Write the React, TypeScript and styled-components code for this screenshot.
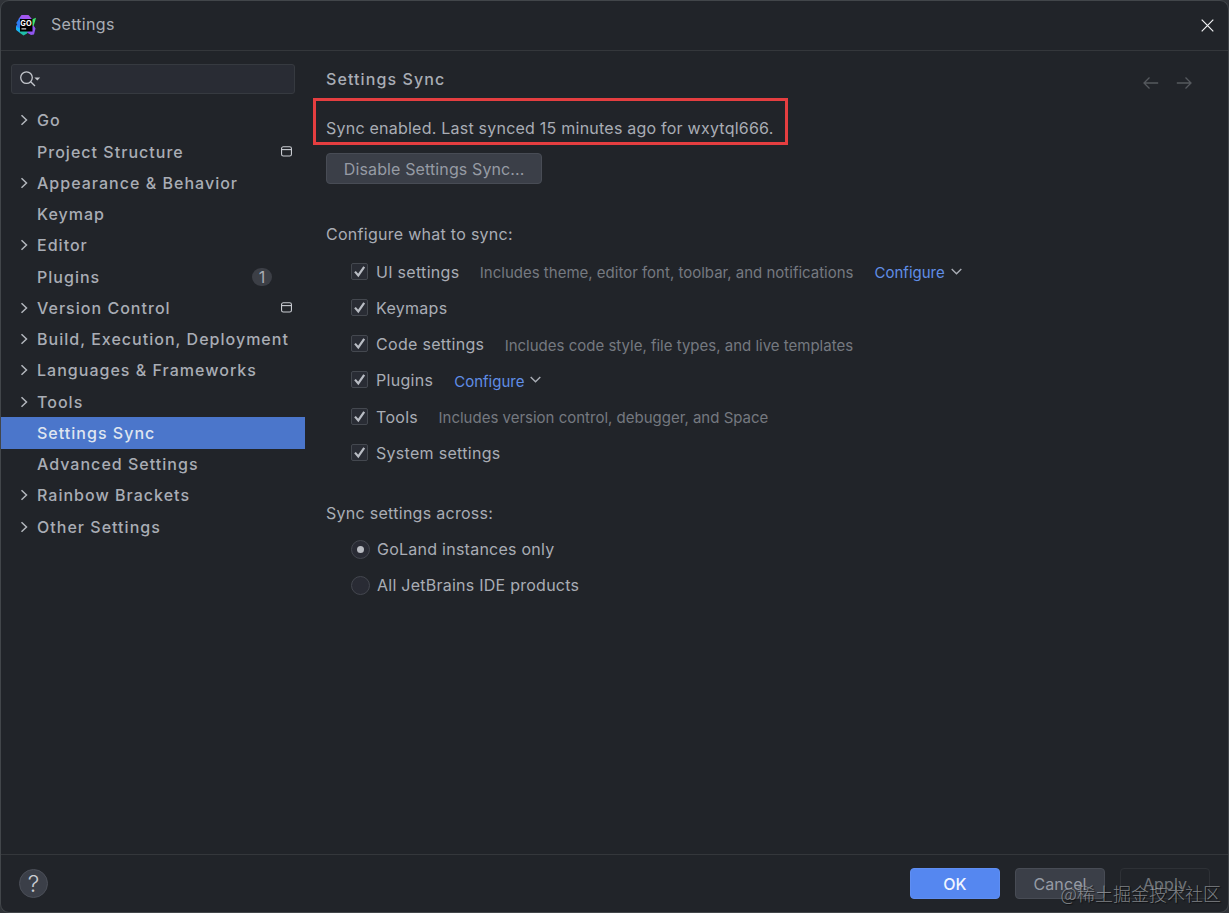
import React from 'react';
import styled, { createGlobalStyle, css } from 'styled-components';

const GlobalStyle = createGlobalStyle`
  *, *::before, *::after { box-sizing: border-box; }
  body {
    margin: 0;
    background: #303338;
    overflow: hidden;
    font-family: Inter, "Noto Sans CJK SC", sans-serif;
    font-size: 16px;
    color: #a9adb5;
  }
`;

const Window = styled.div`
  width: 1229px;
  height: 913px;
  display: flex;
  flex-direction: column;
  background: #212429;
  border: 1px solid #42464a;
  border-radius: 9px;
  position: relative;
`;

const TitleBar = styled.header`
  height: 50px;
  flex: none;
  display: flex;
  align-items: center;
  padding: 0 14px 2px 14px;
  border-bottom: 1px solid #34373b;
`;

const WindowTitle = styled.h1`
  margin: 0 auto 2px 14px;
  font-size: 16px;
  font-weight: 400;
  letter-spacing: 0.3px;
`;

const IconButton = styled.button`
  border: 0;
  padding: 0;
  background: none;
  color: ${(p) => p.color};
  display: flex;
`;

const CloseButton = styled(IconButton)`
  margin-top: 2px;
`;

const NavButton = styled(IconButton)`
  margin-top: 8px;
`;

const Body = styled.div`
  flex: 1;
  display: flex;
  min-height: 0;
`;

const Sidebar = styled.nav`
  width: 304px;
  flex: none;
  padding-top: 13px;
`;

const SearchField = styled.div`
  margin: 0 10px 10.65px;
  height: 30px;
  border: 1px solid #363a40;
  border-radius: 3px;
  background: #292c34;
  display: flex;
  align-items: center;
  padding-left: 8px;
`;

const TreeRow = styled.div<{ $selected?: boolean }>`
  height: 31.27px;
  display: flex;
  align-items: center;
  padding: 0 13px 0 18px;
  font-weight: 500;
  letter-spacing: 1.02px;
  white-space: nowrap;
  ${(p) => p.$selected && css`
    background: #4b76cb;
    color: #dfe5f0;
  `}
`;

const Arrow = styled.span`
  width: 18px;
  flex: none;
  display: flex;
`;

const TreeLabel = styled.span`
  flex: 1;
`;

const Badge = styled.span`
  width: 20px;
  height: 18px;
  margin-right: 20px;
  border-radius: 9px;
  background: #3c3f46;
  font-weight: 400;
  letter-spacing: 0;
  display: flex;
  align-items: center;
  justify-content: center;
`;

const Content = styled.main`
  flex: 1;
  padding-left: 21px;
  display: flex;
  flex-direction: column;
  align-items: flex-start;
`;

const ContentHeader = styled.div`
  height: 47px;
  width: 100%;
  padding: 9px 36px 0 0;
  display: flex;
  align-items: center;
  gap: 17px;
`;

const Heading = styled.h2`
  margin: 0 auto 0 0;
  font-size: 16px;
  font-weight: 500;
  letter-spacing: 1.1px;
`;

const Callout = styled.div`
  width: 475px;
  height: 47px;
  margin-left: -13px;
  padding: 13px 0 0 10px;
  border: 3px solid #e53e40;
  display: flex;
  align-items: center;
  white-space: nowrap;
  letter-spacing: 0.23px;
`;

const Button = styled.button<{ $kind?: 'primary' | 'disabled'; $width: number }>`
  width: ${(p) => p.$width}px;
  height: 31px;
  padding: 0;
  border-radius: 4px;
  border: 1px solid #484c55;
  background: #3b3f48;
  color: #969ba4;
  font: 400 16px Inter, sans-serif;
  letter-spacing: 0.12px;
  white-space: nowrap;
  ${(p) => p.$kind === 'primary' && css`
    background: #5587f0;
    border-color: #5f8ef2;
    color: #f0f5ff;
    font-weight: 500;
  `}
  ${(p) => p.$kind === 'disabled' && css`
    background: transparent;
    border-color: #2e3136;
    color: #70747a;
  `}
`;

const SyncButton = styled(Button)`
  margin-top: 8px;
`;

const GroupLabel = styled.div<{ $top: number }>`
  height: 20px;
  line-height: 20px;
  margin: ${(p) => p.$top}px 0 9.5px;
  letter-spacing: 0.28px;
`;

const OptionRow = styled.div`
  height: 36.25px;
  padding-left: 25px;
  display: flex;
  align-items: center;
  letter-spacing: 0.3px;
`;

const RadioGroup = styled.div`
  margin-top: -1px;
`;

const RadioRow = styled(OptionRow)`
  height: 36px;
  letter-spacing: 0.25px;
`;

const CheckBox = styled.span`
  width: 17px;
  height: 17px;
  margin: 0 8px 1px 0;
  border: 1px solid #44484f;
  border-radius: 2px;
  background: #292c34;
  display: flex;
`;

const Radio = styled.span`
  width: 19px;
  height: 19px;
  margin-right: 7px;
  border: 1px solid #44474f;
  border-radius: 50%;
  background: #292b34;
  display: flex;
  align-items: center;
  justify-content: center;
`;

const RadioDot = styled.span`
  width: 7px;
  height: 7px;
  border-radius: 50%;
  background: #b9bcc2;
`;

const Hint = styled.span`
  margin: 1.6px 0 0 20.4px;
  font-size: 15px;
  letter-spacing: 0;
  color: #757980;
`;

const Link = styled.a`
  margin: 1.6px 0 0 21px;
  font-size: 15px;
  letter-spacing: 0;
  color: #608ee6;
  display: flex;
  align-items: center;
  gap: 6px;
`;

const Footer = styled.footer`
  height: 58px;
  flex: none;
  border-top: 1px solid #34373b;
  padding: 0 18px;
  display: flex;
  align-items: center;
  gap: 15px;
`;

const HelpButton = styled.button`
  width: 29px;
  height: 29px;
  margin-right: auto;
  padding: 0;
  border-radius: 50%;
  border: 1px solid #4b4f58;
  background: #3b3f48;
  color: #c9ccd2;
  font: 300 23px/26px Inter, sans-serif;
`;

const Watermark = styled.div`
  position: absolute;
  right: 7px;
  bottom: 6px;
  font: 300 18px/26px "Noto Sans CJK SC", sans-serif;
  color: rgba(190, 192, 196, 0.62);
  text-shadow: 1px 1px 1px rgba(0, 0, 0, 0.6);
  white-space: nowrap;
`;

const GoLandLogo = () => (
  <svg width="22" height="22" viewBox="0 0 22 22">
    <path d="M6.5 1H13.5L16.5 4.5V7H5L3.5 5Z" fill="#a256ee" />
    <path d="M4.5 4L8 5V18L5.5 18.5L1 15.5V12L2.3 10.5L1.2 9Z" fill="#2f7df2" />
    <path d="M1 12.5L6 15L5 19L1.2 16Z" fill="#18b4f2" />
    <path d="M4.5 16.5H14L12 19.5L8.5 21.5L5 19Z" fill="#1fbfa8" />
    <path d="M17 9L20.5 14.5L19 20.5L16 21L12 18.5L15 15Z" fill="#8f55ee" />
    <path d="M15.5 6L21 3.8L20 7.5L18.5 12H16.5Z" fill="#3fe36d" />
    <rect x="5" y="5" width="12.5" height="12.5" fill="#000" />
    <text x="5.2" y="11.8" fontFamily="Inter, sans-serif" fontWeight="700" fontSize="7.4" textLength="11.5" fill="#fff">GO</text>
    <path d="M6.5 14.9H11.2" stroke="#fff" strokeWidth="1" />
  </svg>
);

const CloseIcon = () => (
  <svg width="13" height="13" viewBox="0 0 13 13" stroke="currentColor" strokeWidth="1.2">
    <path d="M.7.7 12.3 12.3M12.3.7.7 12.3" />
  </svg>
);

const ArrowIcon = ({ flip }: { flip?: boolean }) => (
  <svg width="16" height="14" viewBox="0 0 16 14" fill="none" stroke="currentColor" strokeWidth="1.3">
    <path d={flip ? 'M.8 7H15M9.5 1.5 15 7 9.5 12.5' : 'M15.2 7H1M6.5 1.5 1 7 6.5 12.5'} />
  </svg>
);

const SearchIcon = () => (
  <svg width="22" height="16" viewBox="0 0 22 16" fill="none" stroke="#c3c6cc" strokeWidth="1.3">
    <circle cx="6.5" cy="6.6" r="5.8" />
    <path d="M10.7 10.8 15 15" />
    <path d="M14.4 6.4H20.2L17.3 9.4Z" fill="#c3c6cc" stroke="none" />
  </svg>
);

const ChevronRight = () => (
  <svg width="10" height="12" viewBox="0 0 10 12" fill="none" stroke="#b3b7bd" strokeWidth="1.5">
    <path d="M2.5 1.2 7.5 6 2.5 10.8" />
  </svg>
);

const ChevronDown = () => (
  <svg width="11" height="10" viewBox="0 0 11 10" fill="none" stroke="#a9adb5" strokeWidth="1.4">
    <path d="M.7 1 5.5 5.8 10.3 1" />
  </svg>
);

const ProjectIcon = () => (
  <svg width="11" height="11" viewBox="0 0 11 11" fill="none" stroke="#c9ccd1" strokeWidth="1.1">
    <rect x=".55" y=".8" width="9.9" height="9.2" rx="1.8" />
    <path d="M.6 3.6H10.4" />
  </svg>
);

const CheckIcon = () => (
  <svg width="15" height="15" viewBox="0 0 15 15" fill="none" stroke="#b9bdc4" strokeWidth="2.2">
    <path d="M3 7.6 6.3 11.4 12.2 2.8" />
  </svg>
);

interface TreeItem {
  label: string;
  expandable?: boolean;
  project?: boolean;
  count?: number;
  selected?: boolean;
}

const tree: TreeItem[] = [
  { label: 'Go', expandable: true },
  { label: 'Project Structure', project: true },
  { label: 'Appearance & Behavior', expandable: true },
  { label: 'Keymap' },
  { label: 'Editor', expandable: true },
  { label: 'Plugins', count: 1 },
  { label: 'Version Control', expandable: true, project: true },
  { label: 'Build, Execution, Deployment', expandable: true },
  { label: 'Languages & Frameworks', expandable: true },
  { label: 'Tools', expandable: true },
  { label: 'Settings Sync', selected: true },
  { label: 'Advanced Settings' },
  { label: 'Rainbow Brackets', expandable: true },
  { label: 'Other Settings', expandable: true },
];

const options: { label: string; hint?: string; link?: boolean }[] = [
  { label: 'UI settings', hint: 'Includes theme, editor font, toolbar, and notifications', link: true },
  { label: 'Keymaps' },
  { label: 'Code settings', hint: 'Includes code style, file types, and live templates' },
  { label: 'Plugins', link: true },
  { label: 'Tools', hint: 'Includes version control, debugger, and Space' },
  { label: 'System settings' },
];

export default function App() {
  return (
    <>
      <GlobalStyle />
      <Window>
        <TitleBar>
          <GoLandLogo />
          <WindowTitle>Settings</WindowTitle>
          <CloseButton color="#f2f3f5" aria-label="Close"><CloseIcon /></CloseButton>
        </TitleBar>
        <Body>
          <Sidebar>
            <SearchField><SearchIcon /></SearchField>
            {tree.map((item) => (
              <TreeRow key={item.label} $selected={item.selected}>
                <Arrow>{item.expandable && <ChevronRight />}</Arrow>
                <TreeLabel>{item.label}</TreeLabel>
                {item.count && <Badge>{item.count}</Badge>}
                {item.project && <ProjectIcon />}
              </TreeRow>
            ))}
          </Sidebar>
          <Content>
            <ContentHeader>
              <Heading>Settings Sync</Heading>
              <NavButton color="#55595e" aria-label="Back"><ArrowIcon /></NavButton>
              <NavButton color="#55595e" aria-label="Forward"><ArrowIcon flip /></NavButton>
            </ContentHeader>
            <Callout>Sync enabled. Last synced 15 minutes ago for wxytql666.</Callout>
            <SyncButton $width={216.4}>Disable Settings Sync...</SyncButton>
            <GroupLabel $top={40.1}>Configure what to sync:</GroupLabel>
            {options.map((o) => (
              <OptionRow key={o.label}>
                <CheckBox><CheckIcon /></CheckBox>
                {o.label}
                {o.hint && <Hint>{o.hint}</Hint>}
                {o.link && <Link>Configure <ChevronDown /></Link>}
              </OptionRow>
            ))}
            <GroupLabel $top={31.8}>Sync settings across:</GroupLabel>
            <RadioGroup>
              <RadioRow><Radio><RadioDot /></Radio>GoLand instances only</RadioRow>
              <RadioRow><Radio />All JetBrains IDE products</RadioRow>
            </RadioGroup>
          </Content>
        </Body>
        <Footer>
          <HelpButton>?</HelpButton>
          <Button $kind="primary" $width={90}>OK</Button>
          <Button $width={90}>Cancel</Button>
          <Button $kind="disabled" $width={90}>Apply</Button>
        </Footer>
        <Watermark>@稀土掘金技术社区</Watermark>
      </Window>
    </>
  );
}
